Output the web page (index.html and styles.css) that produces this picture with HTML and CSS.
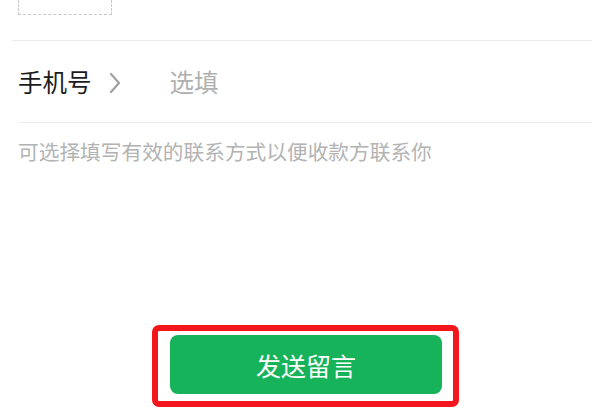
FILE: index.html
```html
<!DOCTYPE html>
<html lang="zh-CN">
<head>
    <meta charset="UTF-8">
    <meta name="viewport" content="width=device-width, initial-scale=1.0">
    <title>留言</title>
    <link rel="stylesheet" href="styles.css">
</head>
<body>
    <div class="page">
        <div class="photo-row">
            <div class="upload-box"></div>
        </div>
        <div class="phone-row">
            <span class="label">手机号</span>
            <svg class="chevron" width="14" height="22" viewBox="0 0 14 22">
                <path d="M3 2 L11 11 L3 20" fill="none" stroke="#a0a0a0" stroke-width="2.2" stroke-linecap="round" stroke-linejoin="round"/>
            </svg>
            <span class="placeholder">选填</span>
        </div>
        <p class="hint">可选择填写有效的联系方式以便收款方联系你</p>
        <div class="actions">
            <div class="highlight">
                <button class="send-btn" type="button">发送留言</button>
            </div>
        </div>
    </div>
</body>
</html>
```

FILE: styles.css
```css
body {
    margin: 0;
    padding: 0;
    background: #fff;
    font-family: "Noto Sans CJK SC", "Noto Sans", sans-serif;
}

.page {
    width: 600px;
    height: 420px;
    overflow: hidden;
}

.photo-row {
    margin-left: 12px;
    margin-right: 8px;
    padding-left: 6px;
    padding-bottom: 25px;
    border-bottom: 1px solid #ececec;
}

.upload-box {
    width: 92px;
    height: 14px;
    border: 1px dashed #c8c8c8;
    border-top: none;
}

.phone-row {
    display: flex;
    align-items: center;
    height: 81px;
    margin: 0 8px 0 18px;
    border-bottom: 1px solid #ececec;
}

.label {
    font-size: 24.5px;
    color: #1c1c1c;
}

.chevron {
    margin-left: 16px;
    margin-top: 2px;
}

.placeholder {
    margin-left: 48px;
    font-size: 24.5px;
    color: #b0b0b0;
}

.hint {
    margin: 14px 0 0 18px;
    font-size: 20.7px;
    line-height: 29px;
    color: #b3b3b3;
}

.actions {
    display: flex;
    padding-left: 152px;
    margin-top: 159px;
}

.highlight {
    padding: 4px 11px 7px 12px;
    border: 6px solid #f3161c;
    border-radius: 7px;
}

.send-btn {
    display: block;
    width: 272px;
    height: 59px;
    border: none;
    border-radius: 8px;
    background: #16b35b;
    color: #fff;
    font-family: inherit;
    font-size: 25px;
    cursor: pointer;
}
```
